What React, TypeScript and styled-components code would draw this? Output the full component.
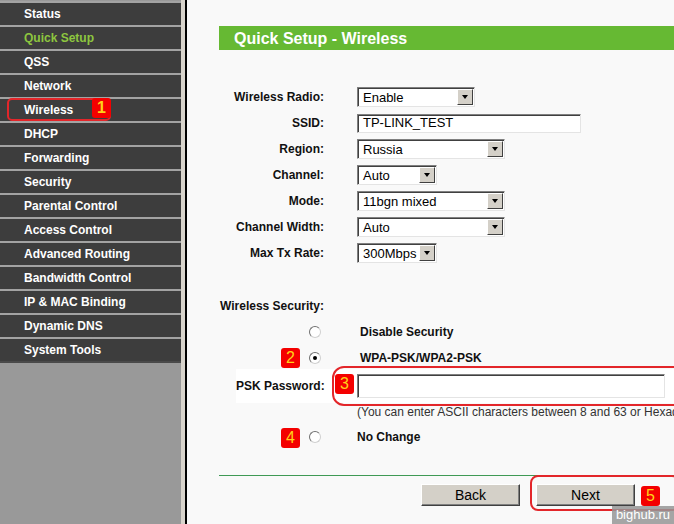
import React, { ReactElement } from 'react'
import styled, { createGlobalStyle } from 'styled-components'

const GlobalStyle = createGlobalStyle`
  html, body {
    margin: 0;
    padding: 0;
    width: 674px;
    height: 524px;
    overflow: hidden;
    font-family: "Liberation Sans", Arial, sans-serif;
  }
`

const Page = styled.div`
  position: relative;
  display: flex;
  width: 674px;
  height: 524px;
  overflow: hidden;
`

const Sidebar = styled.nav`
  width: 181px;
  display: flex;
  flex-direction: column;
  padding-top: 1px;
  background: #999999;
`

const MenuItem = styled.div<{ $active?: boolean }>`
  position: relative;
  height: 22px;
  border-top: 2px solid #a3a3a3;
  background: #3d3d3d;
  color: ${(p) => (p.$active ? '#8dc63f' : '#ffffff')};
  font-size: 12px;
  font-weight: bold;
  line-height: 23px;
  padding-left: 24px;
`

const MenuFiller = styled.div`
  flex: 1;
  border-top: 2px solid #4a4a4a;
  background: #999999;
`

const Divider = styled.div`
  width: 4px;
  background: #d8d4cc;
  border-right: 2px solid #000;
`

const Main = styled.main`
  flex: 1;
  background: #f9f9f9;
  padding: 26px 0 0 32px;
  overflow: hidden;
`

const TitleBar = styled.h1`
  margin: 0;
  width: 560px;
  height: 24px;
  background: #66b933;
  color: #fff;
  font-size: 16px;
  font-weight: bold;
  line-height: 25px;
  padding-left: 15px;
`

const Form = styled.div`
  margin-top: 34px;
  display: flex;
  flex-direction: column;
`

const Row = styled.div<{ $h?: number; $top?: number }>`
  position: relative;
  display: grid;
  grid-template-columns: 105px 1fr;
  column-gap: 33px;
  align-items: center;
  height: ${(p) => p.$h ?? 26}px;
  margin-top: ${(p) => p.$top ?? 0}px;
`

const Label = styled.div`
  text-align: right;
  font-size: 12px;
  font-weight: bold;
  color: #111;
  white-space: nowrap;
`

const SectionLabel = styled.div`
  grid-column: 1 / 3;
  padding-left: 1px;
  font-size: 12px;
  font-weight: bold;
  color: #111;
`

const SelectBox = styled.div<{ $w: number }>`
  box-sizing: border-box;
  display: flex;
  align-items: center;
  width: ${(p) => p.$w}px;
  height: 20px;
  background: #fff;
  border-top: 1px solid #808080;
  border-left: 1px solid #808080;
  border-right: 1px solid #e4e4e4;
  border-bottom: 1px solid #e4e4e4;
  box-shadow: inset 1px 1px 0 #404040;
`

const SelectText = styled.span`
  flex: 1;
  padding-left: 5px;
  font-size: 13px;
  color: #000;
  white-space: nowrap;
  overflow: hidden;
`

const DropButton = styled.span`
  box-sizing: border-box;
  width: 16px;
  height: 16px;
  margin-right: 1px;
  display: flex;
  align-items: center;
  justify-content: center;
  background: #d4d0c8;
  border: 1px solid;
  border-color: #ffffff #404040 #404040 #ffffff;
`

const Arrow = styled.span`
  width: 0;
  height: 0;
  border-left: 3.5px solid transparent;
  border-right: 3.5px solid transparent;
  border-top: 4px solid #000;
`

const TextInput = styled.div<{ $w: number; $h: number }>`
  box-sizing: border-box;
  width: ${(p) => p.$w}px;
  height: ${(p) => p.$h}px;
  background: #fff;
  border-top: 1px solid #808080;
  border-left: 1px solid #808080;
  border-right: 1px solid #e4e4e4;
  border-bottom: 1px solid #e4e4e4;
  box-shadow: inset 1px 1px 0 #404040;
  font-size: 13px;
  line-height: 16px;
  padding-left: 5px;
  color: #000;
`

const RadioCell = styled.div`
  display: flex;
  justify-content: flex-end;
  padding-right: 3px;
`

const Radio = styled.span<{ $checked?: boolean }>`
  box-sizing: border-box;
  width: 12px;
  height: 12px;
  border-radius: 50%;
  background: #fff;
  border: 1px solid;
  border-color: #707070 #d0d0d0 #d0d0d0 #707070;
  display: flex;
  align-items: center;
  justify-content: center;
  &::after {
    content: '';
    width: 4px;
    height: 4px;
    border-radius: 50%;
    background: ${(p) => (p.$checked ? '#000' : 'transparent')};
  }
`

const OptionLabel = styled.div<{ $pad?: number }>`
  padding-left: ${(p) => p.$pad ?? 3}px;
  font-size: 12px;
  font-weight: bold;
  color: #111;
`

const PskRow = styled.div`
  position: relative;
  display: grid;
  grid-template-columns: 88px 1fr;
  column-gap: 33px;
  align-items: center;
  height: 34px;
  margin-top: -2px;
  margin-left: 17px;
  background: #fff;
`

const Hint = styled.div`
  grid-column: 2;
  font-size: 12px;
  color: #333;
  white-space: nowrap;
  overflow: hidden;
`

const Rule = styled.div`
  margin-top: 25px;
  height: 1px;
  width: 560px;
  background: #3f9a55;
`

const ButtonRow = styled.div`
  position: relative;
  display: flex;
  gap: 16px;
  margin-top: 8px;
  padding-left: 202px;
`

const Button = styled.div`
  box-sizing: border-box;
  width: 99px;
  height: 22px;
  background: #d4d0c8;
  border: 1px solid;
  border-color: #ffffff #404040 #404040 #ffffff;
  box-shadow: inset -1px -1px 0 #808080;
  font-size: 14px;
  line-height: 21px;
  text-align: center;
  color: #000;
`

const Outline = styled.div<{ $l: number; $t: number; $w: number; $h: number; $r: number }>`
  position: absolute;
  left: ${(p) => p.$l}px;
  top: ${(p) => p.$t}px;
  width: ${(p) => p.$w}px;
  height: ${(p) => p.$h}px;
  box-sizing: border-box;
  border: 2px solid #e3262a;
  border-radius: ${(p) => p.$r}px;
  pointer-events: none;
`

const Badge = styled.div<{ $l: number; $t: number }>`
  position: absolute;
  left: ${(p) => p.$l}px;
  top: ${(p) => p.$t}px;
  width: 19px;
  height: 20px;
  border-radius: 3px;
  background: #f40000;
  color: #ffd21a;
  font-size: 16px;
  line-height: 20px;
  text-align: center;
`

const Watermark = styled.div`
  position: absolute;
  right: 0;
  bottom: 0;
  width: 62px;
  height: 18px;
  background: rgba(150, 150, 150, 0.85);
  color: #fff;
  font-size: 13px;
  line-height: 18px;
  text-align: center;
`

const menu = [
  'Status',
  'Quick Setup',
  'QSS',
  'Network',
  'Wireless',
  'DHCP',
  'Forwarding',
  'Security',
  'Parental Control',
  'Access Control',
  'Advanced Routing',
  'Bandwidth Control',
  'IP & MAC Binding',
  'Dynamic DNS',
  'System Tools',
]

function Select({ w, value }: { w: number; value: string }): ReactElement {
  return (
    <SelectBox $w={w}>
      <SelectText>{value}</SelectText>
      <DropButton>
        <Arrow />
      </DropButton>
    </SelectBox>
  )
}

export default function App(): ReactElement {
  return (
    <Page>
      <GlobalStyle />
      <Sidebar>
        {menu.map((m) => (
          <MenuItem key={m} $active={m === 'Quick Setup'}>
            {m}
            {m === 'Wireless' && (
              <>
                <Outline $l={7} $t={-1} $w={104} $h={23} $r={5} />
                <Badge $l={92} $t={-1}>1</Badge>
              </>
            )}
          </MenuItem>
        ))}
        <MenuFiller />
      </Sidebar>
      <Divider />
      <Main>
        <TitleBar>Quick Setup - Wireless</TitleBar>
        <Form>
          <Row>
            <Label>Wireless Radio:</Label>
            <Select w={118} value="Enable" />
          </Row>
          <Row>
            <Label>SSID:</Label>
            <TextInput $w={224} $h={19}>TP-LINK_TEST</TextInput>
          </Row>
          <Row>
            <Label>Region:</Label>
            <Select w={148} value="Russia" />
          </Row>
          <Row>
            <Label>Channel:</Label>
            <Select w={80} value="Auto" />
          </Row>
          <Row>
            <Label>Mode:</Label>
            <Select w={148} value="11bgn mixed" />
          </Row>
          <Row>
            <Label>Channel Width:</Label>
            <Select w={148} value="Auto" />
          </Row>
          <Row>
            <Label>Max Tx Rate:</Label>
            <Select w={80} value="300Mbps" />
          </Row>

          <Row $top={27}>
            <SectionLabel>Wireless Security:</SectionLabel>
          </Row>
          <Row>
            <RadioCell>
              <Radio />
            </RadioCell>
            <OptionLabel>Disable Security</OptionLabel>
          </Row>
          <Row>
            <Badge $l={62} $t={3}>2</Badge>
            <RadioCell>
              <Radio $checked />
            </RadioCell>
            <OptionLabel>WPA-PSK/WPA2-PSK</OptionLabel>
          </Row>
          <PskRow>
            <Label>PSK Password:</Label>
            <TextInput $w={308} $h={24} />
            <Outline $l={96} $t={-3} $w={360} $h={40} $r={12} />
            <Badge $l={99} $t={5}>3</Badge>
          </PskRow>
          <Row $h={18}>
            <Hint>(You can enter ASCII characters between 8 and 63 or Hexadecimal characters between 8 and 64.)</Hint>
          </Row>
          <Row $top={3}>
            <Badge $l={62} $t={4}>4</Badge>
            <RadioCell>
              <Radio />
            </RadioCell>
            <OptionLabel $pad={0}>No Change</OptionLabel>
          </Row>
          <Rule />
          <ButtonRow>
            <Button>Back</Button>
            <Button>Next</Button>
            <Outline $l={311} $t={-9} $w={150} $h={36} $r={8} />
            <Badge $l={422} $t={2}>5</Badge>
          </ButtonRow>
        </Form>
      </Main>
      <Watermark>bighub.ru</Watermark>
    </Page>
  )
}
